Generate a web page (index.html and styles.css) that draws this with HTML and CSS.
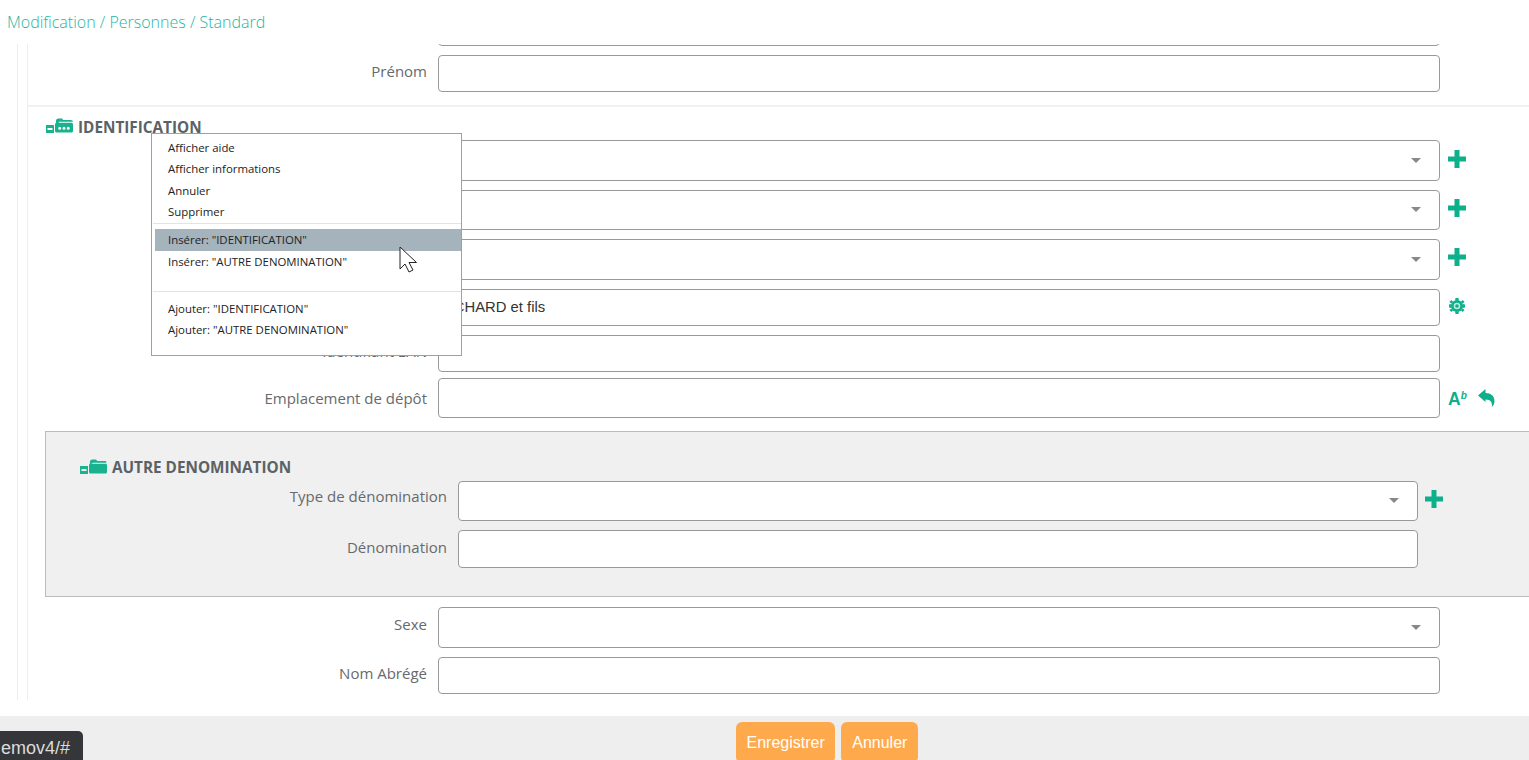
FILE: index.html
```html
<!DOCTYPE html>
<html lang="fr">
<head>
<meta charset="utf-8">
<title>Modification / Personnes / Standard</title>
<link rel="stylesheet" href="styles.css">
</head>
<body>
<svg class="defs" width="0" height="0" aria-hidden="true">
  <symbol id="plus" viewBox="0 0 18 18"><path d="M6.500 0h5v6.500H18v5h-6.500V18h-5v-6.500H0v-5h6.500z"/></symbol>
  <symbol id="minus" viewBox="0 0 8 8"><path fill-rule="evenodd" d="M0 0h8v8H0zM1.500 3v2h5V3z"/></symbol>
</svg>
<div class="page">
  <header class="crumb">Modification / Personnes / Standard</header>
  <main class="rail-outer">
    <div class="rail-inner">
      <div class="row row-clipped"><div class="label"></div><div class="field"></div></div>
      <div class="row"><div class="label">Prénom</div><div class="field h37"></div></div>
      <div class="divider"></div>

      <h2 class="group-title group-id">
        <svg class="minus" width="8" height="8"><use href="#minus"/></svg>
        <svg class="folder" width="18" height="15" viewBox="0 0 19 16" preserveAspectRatio="none"><path fill-rule="evenodd" d="M1 3.500C1 1.500 2 .5 3.500.5h3c1 0 1.500.5 2 1.500h8c1.500 0 2.500 1 2.500 2H4V5H1zM2 5h15c1.300 0 2 .7 2 2v6.500c0 1.300-.7 2-2 2H2c-1.300 0-2-.7-2-2V7c0-1.300.7-2 2-2zm3 4.200a1.600 1.600 0 1 0 0 3.200 1.600 1.600 0 0 0 0-3.200zm4.500 0a1.600 1.600 0 1 0 0 3.200 1.600 1.600 0 0 0 0-3.200zm4.500 0a1.600 1.600 0 1 0 0 3.200 1.600 1.600 0 0 0 0-3.200z"/></svg>
        IDENTIFICATION
      </h2>
      <div class="row"><div class="label"></div><div class="field select h41"><i class="caret"></i></div><svg class="plus" width="18" height="18"><use href="#plus"/></svg></div>
      <div class="row"><div class="label"></div><div class="field select h40"><i class="caret"></i></div><svg class="plus plus-up" width="18" height="18"><use href="#plus"/></svg></div>
      <div class="row"><div class="label"></div><div class="field select h41"><i class="caret"></i></div><svg class="plus plus-up" width="18" height="18"><use href="#plus"/></svg></div>
      <div class="row"><div class="label"></div><div class="field h37 value">ACHARD et fils</div>
        <svg class="gear" width="16" height="16" viewBox="0 0 16 16"><path d="M6.500 0h3l.4 2.500h-3.800zM6.500 16h3l.4-2.500H6.100zM0 6.500v3l2.500.4V6.100zM16 6.500v3l-2.500.4V6.100zM2.300 1.900l-1.900 2 2 1.600 1.700-1.800zM13.700 1.900l1.900 2-2 1.600-1.700-1.800zM2.300 14.100l-1.900-2 2-1.600 1.700 1.800zM13.700 14.100l1.900-2-2-1.600-1.700 1.800z"/><circle cx="8" cy="8" r="6"/><circle class="gear-hole" cx="8" cy="8" r="3.300"/><circle cx="8" cy="8" r="1.800"/></svg>
      </div>
      <div class="row row-tight"><div class="label">Identifiant EAN</div><div class="field h37"></div></div>
      <div class="row row-panel-gap"><div class="label label-mid">Emplacement de dépôt</div><div class="field h40"></div>
        <span class="ab">A<sup>b</sup></span>
        <svg class="undo" width="17" height="18" viewBox="0 0 17 18"><path d="M0 6.500 7.500 0v4c5.500 0 9 3 9 8 0 2.500-1 4.700-2.700 6 .7-4.800-1.300-7.500-6.300-7.500V13z"/></svg>
      </div>

      <section class="panel">
        <h2 class="group-title group-other">
          <svg class="minus" width="8" height="8"><use href="#minus"/></svg>
          <svg class="folder" width="18" height="15" viewBox="0 0 19 16" preserveAspectRatio="none"><path d="M1 3.500C1 1.500 2 .5 3.500.5h3c1 0 1.500.5 2 1.500h8c1.500 0 2 .7 2 2H4.500C3 4 2 5 1.600 6.500L.5 10zM2 5h15c1.300 0 2 .7 2 2v6.500c0 1.300-.7 2-2 2H2c-1.300 0-2-.7-2-2V7c0-1.300.7-2 2-2z"/></svg>
          AUTRE DENOMINATION
        </h2>
        <div class="row panel-row"><div class="label label-low">Type de dénomination</div><div class="field select h40"><i class="caret"></i></div><svg class="plus plus-up" width="18" height="18"><use href="#plus"/></svg></div>
        <div class="row panel-row"><div class="label">Dénomination</div><div class="field h38"></div></div>
      </section>

      <div class="row"><div class="label label-low">Sexe</div><div class="field select h41"><i class="caret"></i></div></div>
      <div class="row"><div class="label">Nom Abrégé</div><div class="field h37"></div></div>
    </div>
  </main>
  <footer class="actions">
    <button class="btn" type="button">Enregistrer</button>
    <button class="btn btn-wide" type="button">Annuler</button>
  </footer>
</div>

<nav class="menu">
  <div class="item">Afficher aide</div>
  <div class="item">Afficher informations</div>
  <div class="item">Annuler</div>
  <div class="item">Supprimer</div>
  <div class="sep"></div>
  <div class="item item-hover">Insérer: "IDENTIFICATION"</div>
  <div class="item">Insérer: "AUTRE DENOMINATION"</div>
  <div class="item item-empty"></div>
  <div class="sep"></div>
  <div class="item item-after">Ajouter: "IDENTIFICATION"</div>
  <div class="item">Ajouter: "AUTRE DENOMINATION"</div>
</nav>

<svg class="cursor" width="20" height="28" viewBox="0 0 20 28"><path d="M1 1v22l5-5 4 8 4-2-4-7.500h7.500z" fill="#fff" stroke="#222" stroke-width="1"/></svg>
<div class="status">emov4/#</div>
</body>
</html>
```
FILE: styles.css
```css
* { box-sizing: border-box; }
html, body { margin: 0; padding: 0; height: 100%; overflow: hidden; background: #fff; }
body { font-family: "Open Sans", sans-serif; color: #676a6c; position: relative; }
.defs { position: absolute; }

.page { width: 1529px; height: 760px; display: flex; flex-direction: column; overflow: hidden; }

.crumb { height: 44px; flex: none; padding: 11px 0 0 7px; font-size: 16px; font-weight: 300; line-height: 22px; color: #1fb5a3; }

.rail-outer { flex: none; height: 656px; margin-left: 17px; padding-left: 9px; border-left: 1px solid #eee; overflow: hidden; }
.rail-inner { height: 100%; border-left: 1px solid #eee; overflow: hidden; }

.row { display: flex; align-items: flex-start; margin-bottom: 9px; }
.row-clipped { margin-top: -35px; }
.row-tight { margin-bottom: 6px; }
.row-panel-gap { margin-bottom: 13px; }

.label { width: 410px; flex: none; padding: 4px 11px 0 0; text-align: right; font-size: 15px; line-height: 24px; color: #676a6c; }
.label-mid { padding-top: 8px; }
.label-low { padding-top: 5px; }

.field { width: 1002px; height: 37px; flex: none; position: relative; background: #fff; border: 1px solid #999; border-radius: 4px; }
.h37 { height: 37px; }
.h38 { height: 38px; }
.h40 { height: 40px; }
.h41 { height: 41px; }

.value { padding: 7px 0 0 5px; font-family: "Liberation Sans", Arial, sans-serif; font-size: 14.800px; line-height: 20px; color: #333; }

.caret { position: absolute; right: 18px; top: 50%; margin-top: -3px; width: 0; height: 0; border-left: 5.500px solid transparent; border-right: 5.500px solid transparent; border-top: 5.500px solid #888; }

.plus { flex: none; margin: 10px 0 0 8px; fill: #0db08b; }
.plus-up { margin-top: 9px; }
.gear { flex: none; margin: 9px 0 0 9px; fill: #0db08b; }
.gear-hole { fill: #bfe9de; }
.ab { flex: none; margin: 9px 0 0 8px; font-family: "Liberation Sans", Arial, sans-serif; font-weight: 700; font-size: 17.500px; line-height: 24px; color: #0db08b; }
.ab sup { font-size: 10px; font-style: italic; line-height: 0; vertical-align: 6px; }
.undo { flex: none; margin: 11px 0 0 11px; fill: #0db08b; }

.divider { height: 2px; margin: 13px 0 0; background: #f1f1f1; }

.group-title { display: flex; align-items: center; margin: 0; font-size: 15.300px; font-weight: 700; line-height: 20px; color: #5b6266; }
.group-id { height: 33px; padding: 10px 0 3px 18px; }
.minus { flex: none; fill: #18b28f; margin-right: 1px; }
.folder { flex: none; fill: #18b28f; margin-right: 5px; }
.group-id .minus { margin-top: 4px; }
.group-id .folder { margin-top: -3px; }
.group-other .minus { margin-top: 6px; }
.group-other .folder { margin-top: -1px; }

.panel { margin: 0 0 10px 17px; height: 166px; padding: 25px 0 0; background: #f0f0f0; border: 1px solid #bbb; border-right: 0; }
.group-other { height: 20px; padding-left: 34px; margin-bottom: 4px; }
.panel-row { margin-bottom: 9px; }
.panel-row .label { width: 401px; padding-right: 0; padding-top: 3px; }
.panel-row .label-low { padding-top: 3px; }
.panel-row .field { width: 960px; margin-left: 11px; }
.panel-row .plus { margin-left: 7px; }
.panel-row:last-child .label { padding-top: 5px; }

.actions { flex: none; height: 60px; margin-top: 16px; padding: 6px 0 0 736px; display: flex; gap: 6px; align-items: flex-start; background: #eee; }
.btn { height: 41px; padding: 0 10.500px; border: 0; border-radius: 6px; background: #ffa94d; color: #fff; font-family: "Liberation Sans", Arial, sans-serif; font-size: 16px; }
.btn-wide { padding: 0 11px; }

.menu { position: absolute; left: 151px; top: 133px; width: 311px; height: 223px; padding: 3px 0 0 3px; background: #fff; border: 1px solid #a0a0a0; font-family: "Open Sans", sans-serif; font-size: 11.400px; color: #222; }
.item { height: 21.300px; line-height: 21px; padding-left: 13px; white-space: nowrap; }
.item-hover { height: 22px; line-height: 22px; background: #a4b3bc; margin-top: 5px; }
.item-empty { height: 17.500px; }
.item-after { margin-top: 6px; }
.sep { height: 1px; margin-left: -2px; background: #e3e3e3; margin-top: 1px; }

.cursor { position: absolute; left: 399px; top: 246px; }

.status { position: absolute; left: 0; bottom: 0; width: 83px; height: 29px; padding: 6px 0 0 1px; background: #35363a; border-top-right-radius: 5px; font-family: "Liberation Sans", Arial, sans-serif; font-size: 18px; line-height: 22px; color: #dcdcdc; white-space: nowrap; }
```
